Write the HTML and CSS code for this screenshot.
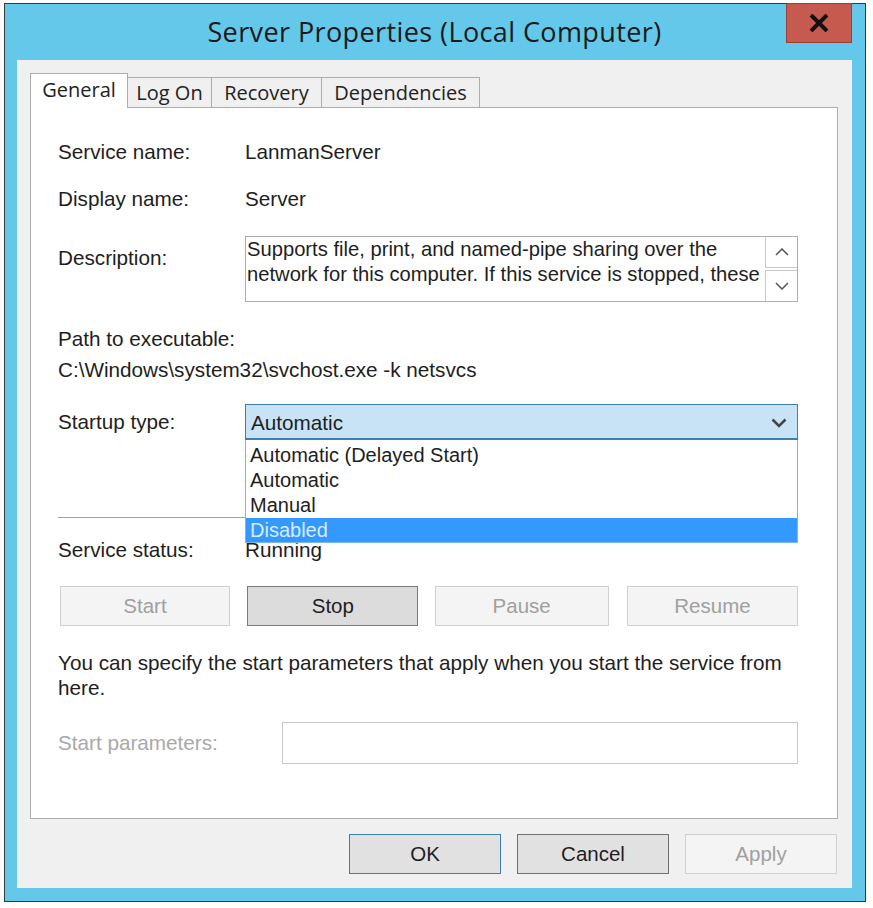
FILE: index.html
```html
<!DOCTYPE html>
<html lang="en">
<head>
    <meta charset="UTF-8">
    <title>Server Properties (Local Computer)</title>
    <link rel="stylesheet" href="styles.css">
</head>
<body>
    <div class="window">
        <div class="titlebar">
            <span></span>
            <h1 class="title">Server Properties (Local Computer)</h1>
            <button class="close-btn" aria-label="Close">
                <svg width="20" height="18" viewBox="0 0 20 18">
                    <path d="M2 1 L18 17 M18 1 L2 17" stroke="#111" stroke-width="4" fill="none"/>
                </svg>
            </button>
        </div>

        <div class="client">
            <ul class="tabs">
                <li class="tab active">General</li>
                <li class="tab tab-logon">Log On</li>
                <li class="tab tab-recovery">Recovery</li>
                <li class="tab tab-deps">Dependencies</li>
            </ul>

            <div class="panel">
                <div class="field row-name">
                    <span class="field-label">Service name:</span>
                    <span>LanmanServer</span>
                </div>
                <div class="field row-display">
                    <span class="field-label">Display name:</span>
                    <span>Server</span>
                </div>
                <div class="desc-row">
                    <span class="field-label desc-label">Description:</span>
                    <div class="desc-box">
                        <div class="desc-text">
                            <div>Supports file, print, and named-pipe sharing over the</div>
                            <div>network for this computer. If this service is stopped, these</div>
                        </div>
                        <div class="desc-scroll">
                            <span class="scroll-btn scroll-up">
                                <svg width="14" height="8" viewBox="0 0 14 8"><polyline points="1,7 7,1 13,7" fill="none" stroke="#555" stroke-width="1.5"/></svg>
                            </span>
                            <span class="scroll-btn scroll-down">
                                <svg width="14" height="8" viewBox="0 0 14 8"><polyline points="1,1 7,7 13,1" fill="none" stroke="#555" stroke-width="1.5"/></svg>
                            </span>
                        </div>
                    </div>
                </div>
                <div class="path-label">Path to executable:</div>
                <div class="path-value">C:\Windows\system32\svchost.exe -k netsvcs</div>

                <div class="field row-startup">
                    <span class="field-label">Startup type:</span>
                    <div class="combo">
                        <div class="combo-box">
                            <span>Automatic</span>
                            <svg width="16" height="10" viewBox="0 0 16 10"><polyline points="1.5,1.5 8,8 14.5,1.5" fill="none" stroke="#444" stroke-width="2.5"/></svg>
                        </div>
                        <ul class="combo-list">
                            <li>Automatic (Delayed Start)</li>
                            <li>Automatic</li>
                            <li>Manual</li>
                            <li class="selected">Disabled</li>
                        </ul>
                    </div>
                </div>

                <div class="separator"></div>

                <div class="field row-status">
                    <span class="field-label">Service status:</span>
                    <span>Running</span>
                </div>

                <div class="service-buttons">
                    <button class="btn btn-start" disabled>Start</button>
                    <button class="btn btn-stop">Stop</button>
                    <button class="btn btn-pause" disabled>Pause</button>
                    <button class="btn btn-resume" disabled>Resume</button>
                </div>

                <p class="hint">You can specify the start parameters that apply when you start the service from here.</p>

                <div class="field row-params">
                    <span class="field-label params-label">Start parameters:</span>
                    <input class="params-input" type="text" disabled>
                </div>
            </div>

            <div class="dialog-buttons">
                <button class="btn btn-default">OK</button>
                <button class="btn">Cancel</button>
                <button class="btn" disabled>Apply</button>
            </div>
        </div>
    </div>
</body>
</html>
```

FILE: styles.css
```css
* {
    box-sizing: border-box;
}

body {
    margin: 0;
    background-color: #fff;
    font-family: "Liberation Sans", Arial, sans-serif;
    font-size: 20.7px;
    color: #1e1e1e;
}

.window {
    margin: 3px 0 0 4px;
    width: 862px;
    height: 899px;
    border: 1px solid #3a3a3a;
    background-color: #63c8e9;
    padding: 0 13px 13px 12px;
    display: flex;
    flex-direction: column;
}

.titlebar {
    height: 56px;
    display: grid;
    grid-template-columns: 1fr auto 1fr;
    align-items: center;
}

.title {
    margin: 0 0 2px 0;
    font-family: "Open Sans", "Noto Sans", sans-serif;
    font-weight: 400;
    font-size: 27px;
    letter-spacing: 0.4px;
    color: #1a1a1a;
}

.close-btn {
    justify-self: end;
    align-self: start;
    margin-top: -1px;
    width: 66px;
    height: 40px;
    border: 1px solid #9a3f35;
    background-color: #c75a4e;
    padding: 0;
    display: flex;
    align-items: center;
    justify-content: center;
}

.client {
    flex: 1;
    background-color: #f0f0f0;
    padding: 13px 14px 0 13px;
}

/* tabs */
.tabs {
    list-style: none;
    margin: 0;
    padding: 0;
    display: flex;
    align-items: flex-end;
    height: 34px;
    font-family: "Open Sans", "Noto Sans", sans-serif;
    font-size: 20px;
}

.tab {
    height: 30px;
    border: 1px solid #adadad;
    border-bottom: none;
    background-color: #f0f0f0;
    display: flex;
    align-items: center;
    justify-content: center;
    margin-left: -1px;
    color: #222;
}

.tab.active {
    height: 35px;
    width: 98px;
    margin-left: 0;
    margin-bottom: -1px;
    background-color: #fff;
    position: relative;
    z-index: 1;
    padding-bottom: 4px;
}

.tab-logon {
    width: 85px;
}

.tab-recovery {
    width: 111px;
}

.tab-deps {
    width: 159px;
}

.panel {
    height: 712px;
    background-color: #fff;
    border: 1px solid #adadad;
    padding: 29px 39px 0 27px;
}

.field {
    display: flex;
    align-items: center;
    height: 30px;
}

.field-label {
    width: 187px;
    flex-shrink: 0;
}

.row-display {
    margin-top: 17px;
}

.desc-row {
    display: flex;
    align-items: flex-start;
    margin-top: 22px;
}

.desc-label {
    padding-top: 10px;
    line-height: 24px;
}

.desc-box {
    width: 553px;
    height: 66px;
    border: 1px solid #abadb3;
    display: flex;
}

.desc-text {
    flex: 1;
    overflow: hidden;
    white-space: nowrap;
    font-size: 20.2px;
    line-height: 25px;
    padding-left: 1px;
}

.desc-scroll {
    width: 32px;
    flex-shrink: 0;
    display: flex;
    flex-direction: column;
}

.scroll-btn {
    height: 31px;
    border-left: 1px solid #c8c8c8;
    display: flex;
    align-items: center;
    justify-content: center;
}

.scroll-up {
    border-bottom: 1px solid #c8c8c8;
}

.scroll-down {
    margin-top: 2px;
    border-top: 1px solid #c8c8c8;
}

.path-label {
    margin-top: 25px;
    line-height: 24px;
}

.path-value {
    margin-top: 7px;
    line-height: 24px;
}

.row-startup {
    margin-top: 22px;
    height: 36px;
}

.combo {
    position: relative;
    width: 553px;
}

.combo-box {
    height: 36px;
    background-color: #c8e3f5;
    border: 1px solid #3c7fb1;
    border-bottom-width: 2px;
    display: flex;
    align-items: center;
    justify-content: space-between;
    padding: 2px 10px 0 5px;
}

.combo-list {
    position: absolute;
    top: 100%;
    left: 0;
    right: 0;
    z-index: 2;
    list-style: none;
    margin: 0;
    padding: 3px 0 0 0;
    background-color: #fff;
    border: 1px solid #7ab6e6;
    border-top: none;
    font-size: 20px;
}

.combo-list li {
    height: 25px;
    line-height: 25px;
    padding-left: 4px;
}

.combo-list li.selected {
    height: 24px;
    background-color: #3399ff;
    color: #d8ecff;
}

.separator {
    margin-top: 77px;
    border-top: 1px solid #a0a0a0;
}

.row-status {
    margin-top: 17px;
}

.service-buttons {
    margin-top: 21px;
    padding-left: 2px;
    display: flex;
    justify-content: space-between;
}

.btn {
    height: 40px;
    font-family: "Liberation Sans", Arial, sans-serif;
    font-size: 20.5px;
    color: #1e1e1e;
    background-color: #e1e1e1;
    border: 1px solid #707070;
    padding: 0;
}

.btn:disabled {
    background-color: #f4f4f4;
    border-color: #d0d0d0;
    color: #a0a0a0;
}

.btn-start {
    width: 170px;
}

.btn-stop {
    width: 171px;
    margin-left: -1px;
    background-color: #dcdcdc;
    border-color: #7a7a7a;
}

.btn-pause {
    width: 174px;
    margin-left: -2px;
}

.btn-resume {
    width: 171px;
}

.hint {
    margin: 24px 0 0 0;
    line-height: 25px;
    max-width: 730px;
}

.row-params {
    margin-top: 22px;
    height: 42px;
}

.params-label {
    width: 224px;
    color: #a9a9a9;
}

.params-input {
    width: 516px;
    height: 42px;
    border: 1px solid #c8c8c8;
    background-color: #fff;
}

.dialog-buttons {
    margin-top: 15px;
    display: flex;
    justify-content: flex-end;
    gap: 16px;
    padding-right: 1px;
}

.dialog-buttons .btn {
    width: 152px;
}

.btn-default {
    border-color: #3c7fb1;
}
```
